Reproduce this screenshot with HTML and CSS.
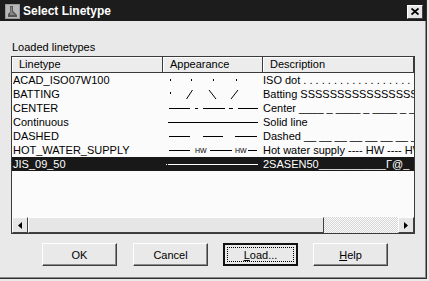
FILE: index.html
```html
<!DOCTYPE html>
<html lang="en">
<head>
  <meta charset="UTF-8">
  <title>Select Linetype</title>
  <link rel="stylesheet" href="styles.css">
</head>
<body>
  <div class="dialog">
    <!-- Title bar -->
    <div class="titlebar">
      <svg class="app-icon" width="15" height="15" viewBox="0 0 15 15">
        <rect x="0" y="0" width="15" height="15" fill="#9a9a9a"/>
        <rect x="1" y="1" width="13" height="13" fill="#b8b8b8"/>
        <path d="M5 2 L8 2 L8 7 L12 11 L12 13 L3 13 L3 10 L5 8 Z" fill="#555"/>
        <path d="M6 3 L7 3 L7 8 L10 11 L5 11 Z" fill="#888"/>
      </svg>
      <span class="title">Select Linetype</span>
      <button class="close" type="button">
        <svg width="8" height="7" viewBox="0 0 8 7">
          <path d="M0.5 0.5 L7.5 6.5 M7.5 0.5 L0.5 6.5" stroke="#000" stroke-width="1.8"/>
        </svg>
      </button>
    </div>

    <div class="content">
      <div class="caption">Loaded linetypes</div>

      <!-- List of linetypes -->
      <div class="listview">
        <div class="list-header">
          <div class="hcell">Linetype</div>
          <div class="hcell">Appearance</div>
          <div class="hcell">Description</div>
        </div>

        <div class="list-body">
          <div class="row">
            <div class="cell name">ACAD_ISO07W100</div>
            <div class="cell look">
              <svg width="100" height="14" viewBox="0 0 100 14">
                <rect x="7" y="6" width="1" height="2" fill="#000"/>
                <rect x="28" y="6" width="1" height="2" fill="#000"/>
                <rect x="50" y="6" width="1" height="2" fill="#000"/>
                <rect x="73" y="6" width="1" height="2" fill="#000"/>
              </svg>
            </div>
            <div class="cell desc">ISO dot . . . . . . . . . . . . . . . . . . . . . . . . . . . .</div>
          </div>
          <div class="row">
            <div class="cell name">BATTING</div>
            <div class="cell look">
              <svg width="100" height="14" viewBox="0 0 100 14">
                <rect x="7" y="5" width="1" height="2" fill="#000"/>
                <path d="M23.5 12 L29.5 3 M46 3 L53 12 M68 12 L75 3" stroke="#000" stroke-width="1" fill="none"/>
              </svg>
            </div>
            <div class="cell desc">Batting SSSSSSSSSSSSSSSSSSSSSSSS</div>
          </div>
          <div class="row">
            <div class="cell name">CENTER</div>
            <div class="cell look">
              <svg width="100" height="14" viewBox="0 0 100 14">
                <path d="M6 7.5 H27 M32 7.5 H35 M40 7.5 H62 M66 7.5 H70 M75 7.5 H95" stroke="#000" stroke-width="1"/>
              </svg>
            </div>
            <div class="cell desc">Center ____ _ ____ _ ____ _ ____ _ ____</div>
          </div>
          <div class="row">
            <div class="cell name">Continuous</div>
            <div class="cell look">
              <svg width="100" height="14" viewBox="0 0 100 14">
                <path d="M5 7.5 H95" stroke="#000" stroke-width="1"/>
              </svg>
            </div>
            <div class="cell desc">Solid line</div>
          </div>
          <div class="row">
            <div class="cell name">DASHED</div>
            <div class="cell look">
              <svg width="100" height="14" viewBox="0 0 100 14">
                <path d="M6 7.5 H27 M40 7.5 H60 M72 7.5 H94" stroke="#000" stroke-width="1"/>
              </svg>
            </div>
            <div class="cell desc">Dashed __ __ __ __ __ __ __ __ __ __</div>
          </div>
          <div class="row">
            <div class="cell name">HOT_WATER_SUPPLY</div>
            <div class="cell look">
              <svg width="100" height="14" viewBox="0 0 100 14">
                <path d="M6 7.5 H27 M47 7.5 H69 M85 7.5 H94" stroke="#000" stroke-width="1"/>
                <text x="32" y="10" class="hw">HW</text>
                <text x="72" y="10" class="hw">HW</text>
              </svg>
            </div>
            <div class="cell desc">Hot water supply ---- HW ---- HW ---- HW</div>
          </div>
          <div class="row selected">
            <div class="cell name">JIS_09_50</div>
            <div class="cell look">
              <svg width="100" height="14" viewBox="0 0 100 14">
                <rect x="3" y="7" width="1" height="1" fill="#fff"/>
                <path d="M5 7.5 H95" stroke="#fff" stroke-width="1"/>
              </svg>
            </div>
            <div class="cell desc">2SASEN50___________Γ@_</div>
          </div>
        </div>

        <!-- Horizontal scrollbar -->
        <div class="hscroll">
          <div class="arrow">
            <svg width="4" height="7" viewBox="0 0 4 7"><path d="M4 0 L0 3.5 L4 7 Z" fill="#000"/></svg>
          </div>
          <div class="thumb"></div>
          <div class="track"></div>
          <div class="arrow">
            <svg width="4" height="7" viewBox="0 0 4 7"><path d="M0 0 L4 3.5 L0 7 Z" fill="#000"/></svg>
          </div>
        </div>
      </div>

      <!-- Buttons -->
      <div class="buttons">
        <button type="button" class="btn">OK</button>
        <button type="button" class="btn">Cancel</button>
        <button type="button" class="btn default"><span class="focus"><u>L</u>oad...</span></button>
        <button type="button" class="btn"><u>H</u>elp</button>
      </div>
    </div>
  </div>
</body>
</html>
```

FILE: styles.css
```css
/* Common */
body {
  margin: 0;
  background-color: #e9e9e9;
  font-family: "Liberation Sans", Arial, sans-serif;
  font-size: 11px;
  color: #000;
}

/* Window */
.dialog {
  width: 427px;
  height: 279px;
  box-sizing: border-box;
  background-color: #e9e9e9;
  border-right: 1px solid #2e2e2e;
  border-bottom: 1px solid #2e2e2e;
  box-shadow: inset -1px -1px #8a8a8a;
  overflow: hidden;
}

/* Title bar */
.titlebar {
  height: 21px;
  background-color: #1c1c1c;
  display: flex;
  align-items: center;
  padding-left: 5px;
  padding-right: 3px;
}

.app-icon {
  flex: none;
  margin-top: 1px;
}

.title {
  color: #fff;
  font-weight: bold;
  font-size: 12px;
  margin-left: 3px;
  flex: 1;
}

.close {
  width: 16px;
  height: 14px;
  padding: 0;
  margin-top: 2px;
  background-color: #e6e6e6;
  border: 1px solid;
  border-color: #fff #404040 #404040 #fff;
  display: flex;
  align-items: center;
  justify-content: center;
}

/* Content */
.content {
  padding: 19px 0 0 11px;
}

.caption {
  height: 14px;
  line-height: 14px;
  padding-left: 1px;
}

/* List */
.listview {
  margin-top: 2px;
  width: 404px;
  height: 178px;
  box-sizing: border-box;
  border: 1px solid #3a3a3a;
  background-color: #fbfbfb;
  display: flex;
  flex-direction: column;
}

.list-header,
.row {
  display: grid;
  grid-template-columns: 151px 100px 1fr;
}

.list-header {
  height: 16px;
}

.hcell {
  background-color: #ececec;
  line-height: 15px;
  padding-left: 7px;
  box-shadow: inset -1px -1px #3a3a3a, inset 1px 1px #fff;
  white-space: nowrap;
  overflow: hidden;
}

.list-body {
  flex: 1;
}

.row {
  height: 14px;
  line-height: 14px;
}

.cell {
  white-space: nowrap;
  overflow: hidden;
}

.name {
  padding-left: 1px;
}

.look svg {
  display: block;
}

.hw {
  font-family: "Liberation Sans", sans-serif;
  font-size: 7px;
  fill: #000;
}

.row.selected {
  background-color: #181818;
  color: #fff;
}

.row.selected .hw {
  fill: #fff;
}

/* Scrollbar */
.hscroll {
  height: 16px;
  display: flex;
}

.arrow {
  width: 16px;
  box-sizing: border-box;
  background-color: #e6e6e6;
  border: 1px solid;
  border-color: #fff #404040 #404040 #fff;
  display: flex;
  align-items: center;
  justify-content: center;
}

.thumb {
  width: 296px;
  box-sizing: border-box;
  background-color: #e6e6e6;
  border: 1px solid;
  border-color: #fff #404040 #404040 #fff;
}

.track {
  flex: 1;
  background: repeating-conic-gradient(#fafafa 0 25%, #d6d6d6 0 50%) 0 0 / 2px 2px;
}

/* Buttons */
.buttons {
  display: flex;
  gap: 15px;
  margin-top: 9px;
  padding-left: 31px;
}

.btn {
  width: 75px;
  height: 23px;
  padding: 0;
  background-color: #e9e9e9;
  font-family: "Liberation Sans", Arial, sans-serif;
  font-size: 11px;
  color: #000;
  border: 1px solid;
  border-color: #fff #404040 #404040 #fff;
  box-shadow: inset -1px -1px #8a8a8a;
}

.btn:first-child {
  margin-right: 1px;
}

.btn.default {
  border: 2px solid #111;
  box-shadow: none;
  padding: 2px;
}

.focus {
  display: flex;
  align-items: center;
  justify-content: center;
  height: 100%;
  box-sizing: border-box;
  border: 1px dotted #000;
}
```
